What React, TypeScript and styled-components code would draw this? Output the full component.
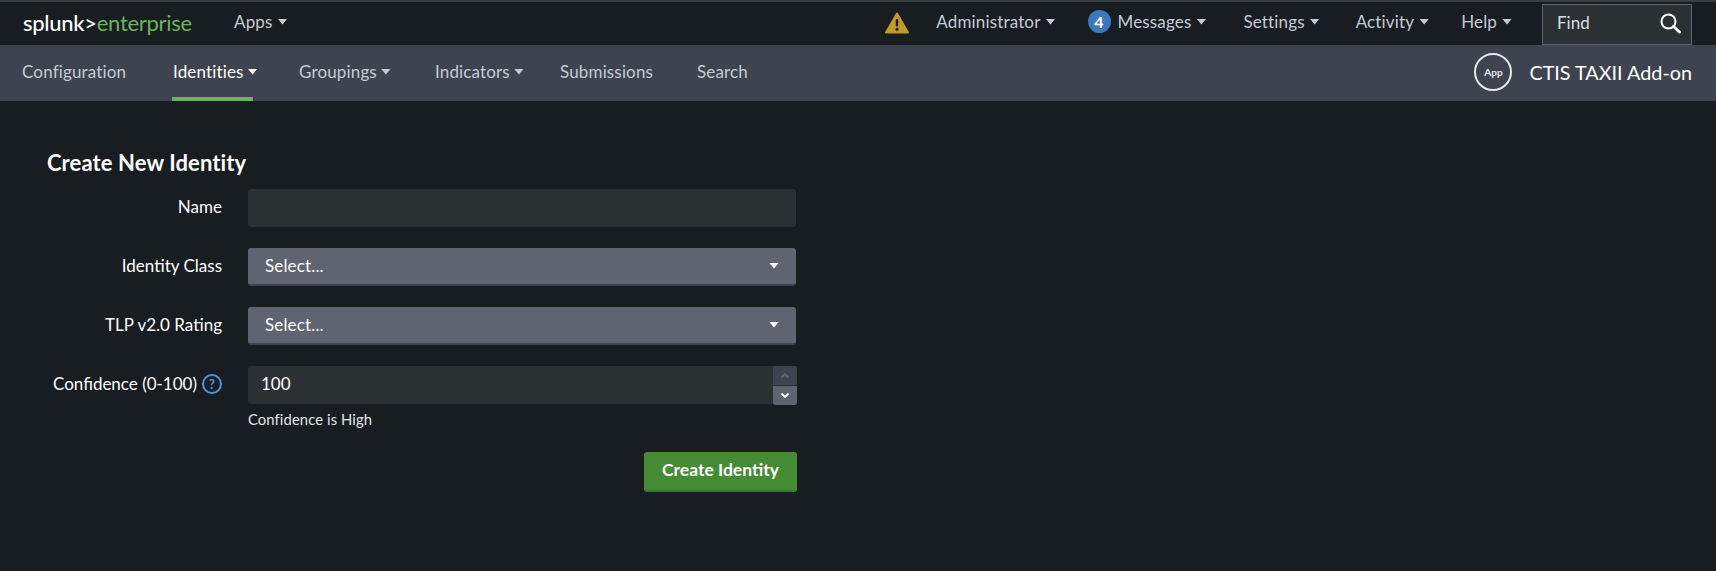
import React from 'react';
import styled, { createGlobalStyle } from 'styled-components';

const GlobalStyle = createGlobalStyle`
  html, body {
    margin: 0;
    height: 100%;
    background-color: #171d21;
    font-family: 'Lato', 'Open Sans', sans-serif;
  }
  * {
    box-sizing: border-box;
  }
`;

const Page = styled.div`
  min-height: 571px;
  background-color: #171d21;
  color: #fff;
`;

const TopBar = styled.header`
  display: flex;
  align-items: center;
  height: 45px;
  padding: 0 24px 0 23px;
  background-color: #171d21;
  border-top: 2px solid #3c3f42;
`;

const Logo = styled.div`
  width: 211px;
  padding-bottom: 2px;
  font-size: 22px;
  letter-spacing: -0.3px;
  color: #fff;
  font-weight: 500;
  white-space: nowrap;

  span {
    color: #6db35c;
    font-weight: 400;
  }
`;

const TopLink = styled.a<{ $gap: number }>`
  display: inline-flex;
  align-items: center;
  gap: 5px;
  margin-right: ${(p) => p.$gap}px;
  padding-bottom: 4px;
  font-size: 17px;
  letter-spacing: 0.15px;
  color: #c3cbd4;
  white-space: nowrap;
`;

const Caret = styled.i<{ $color?: string }>`
  display: inline-block;
  width: 10px;
  height: 6px;
  background-color: ${(p) => p.$color || '#c3cbd4'};
  clip-path: polygon(0 0, 100% 0, 50% 100%);
`;

const Spacer = styled.div`
  flex: 1;
`;

const WarningIcon = styled.svg`
  width: 24px;
  height: 22px;
  margin-right: 27px;
  margin-bottom: 2px;
`;

const Badge = styled.span`
  display: inline-flex;
  align-items: center;
  justify-content: center;
  width: 23px;
  height: 23px;
  margin-right: 2px;
  border-radius: 50%;
  background-color: #3c78bd;
  color: #fff;
  font-size: 16px;
  font-weight: 700;
`;

const FindBox = styled.div`
  display: flex;
  align-items: center;
  justify-content: space-between;
  width: 150px;
  height: 41px;
  margin-top: 1px;
  padding: 0 10px 3px 14px;
  background-color: #2b3033;
  border: 1px solid #5c6773;
  font-size: 17px;
  color: #d8dde2;
`;

const AppBar = styled.nav`
  display: flex;
  align-items: stretch;
  height: 56px;
  padding: 0 24px 0 22px;
  background-color: #3e444f;
`;

const NavItem = styled.a<{ $active?: boolean; $width: number }>`
  display: flex;
  align-items: center;
  gap: 4px;
  width: ${(p) => p.$width}px;
  height: 56px;
  padding-bottom: 3px;
  font-size: 17px;
  letter-spacing: 0.15px;
  color: ${(p) => (p.$active ? '#fff' : '#c3cbd4')};
  white-space: nowrap;
`;

const ActiveTab = styled(NavItem)`
  position: relative;

  &::after {
    content: '';
    position: absolute;
    left: -1px;
    bottom: 0;
    width: 81px;
    height: 4px;
    background-color: #6db35c;
  }
`;

const AppTitle = styled.div`
  display: flex;
  align-items: center;
  gap: 17px;
  padding-bottom: 3px;
  font-size: 19.8px;
  color: #fff;
  white-space: nowrap;
`;

const AppCircle = styled.span`
  display: flex;
  align-items: center;
  justify-content: center;
  width: 38px;
  height: 38px;
  border: 2px solid #e6e8ea;
  border-radius: 50%;
  font-size: 10px;
  font-weight: 700;
  color: #e6e8ea;
`;

const Main = styled.main`
  padding: 51px 0 0 47px;
`;

const Heading = styled.h2`
  margin: 0 0 15px;
  font-size: 22px;
  line-height: 22px;
  letter-spacing: 0.1px;
  font-weight: 700;
  color: #fff;
`;

const Form = styled.form`
  display: grid;
  grid-template-columns: 175px 548px;
  column-gap: 26px;
  row-gap: 21px;
  align-items: start;
`;

const Label = styled.label`
  display: flex;
  align-items: center;
  justify-content: flex-end;
  gap: 5px;
  height: 38px;
  padding-bottom: 3px;
  font-size: 17px;
  color: #fff;
  white-space: nowrap;
`;

const TextInput = styled.input`
  display: block;
  width: 100%;
  height: 38px;
  padding: 0 13px 3px;
  border: none;
  border-radius: 3px;
  background-color: #2b3033;
  color: #fff;
  font-family: inherit;
  font-size: 17px;
  outline: none;
`;

const SelectButton = styled.div`
  display: flex;
  align-items: center;
  justify-content: space-between;
  height: 38px;
  padding: 0 17px 1px;
  border-radius: 3px;
  background-color: #5e6570;
  border-bottom: 2px solid #3e444f;
  font-size: 17px;
  letter-spacing: 0.15px;
  color: #fff;
`;

const NumberField = styled.div`
  position: relative;
`;

const Stepper = styled.div`
  position: absolute;
  top: 0;
  right: -1px;
  display: flex;
  flex-direction: column;
  gap: 1px;
  width: 24px;
  height: 39px;
`;

const StepButton = styled.span<{ $disabled?: boolean }>`
  display: flex;
  align-items: center;
  justify-content: center;
  height: 19px;
  border-radius: ${(p) => (p.$disabled ? '3px 3px 0 0' : '0 0 3px 3px')};
  background-color: ${(p) => (p.$disabled ? '#3e444f' : '#5e6570')};
`;

const HelpText = styled.div`
  margin-top: 7px;
  font-size: 14.8px;
  line-height: 16px;
  letter-spacing: 0.1px;
  color: #e1e4e8;
`;

const HelpIcon = styled.span`
  display: inline-flex;
  align-items: center;
  justify-content: center;
  width: 20px;
  height: 20px;
  border: 2px solid #4b95e6;
  border-radius: 50%;
  font-size: 13px;
  font-weight: 700;
  color: #4b95e6;
`;

const Actions = styled.div`
  grid-column: 2;
  display: flex;
  justify-content: flex-end;
  margin-top: 4px;
  margin-right: -1px;
`;

const SubmitButton = styled.button`
  width: 153px;
  height: 40px;
  padding: 0 0 3px;
  border: none;
  border-bottom: 2px solid #3c7a2c;
  border-radius: 3px;
  background-color: #458b33;
  color: #fff;
  font-family: inherit;
  font-size: 17.5px;
  font-weight: 700;
`;

const Chevron: React.FC<{ up?: boolean; color: string }> = ({ up, color }) => (
  <svg width="10" height="7" viewBox="0 0 10 7">
    <path d={up ? 'M1.5 5.5 5 2l3.5 3.5' : 'M1.5 1.5 5 5l3.5-3.5'} fill="none" stroke={color} strokeWidth="1.8" />
  </svg>
);

const App: React.FC = () => {
  return (
    <Page>
      <GlobalStyle />
      <TopBar>
        <Logo>
          splunk&gt;<span>enterprise</span>
        </Logo>
        <TopLink $gap={0}>
          Apps <Caret />
        </TopLink>
        <Spacer />
        <WarningIcon viewBox="0 0 24 22">
          <path d="M12 1.5 23 20.5H1Z" fill="#c0992a" stroke="#c0992a" strokeWidth="2" strokeLinejoin="round" />
          <rect x="10.8" y="7" width="2.4" height="7.5" rx="1" fill="#171d21" />
          <circle cx="12" cy="17.2" r="1.5" fill="#171d21" />
        </WarningIcon>
        <TopLink $gap={32}>
          Administrator <Caret />
        </TopLink>
        <TopLink $gap={37}>
          <Badge>4</Badge>
          Messages <Caret />
        </TopLink>
        <TopLink $gap={36}>
          Settings <Caret />
        </TopLink>
        <TopLink $gap={32}>
          Activity <Caret />
        </TopLink>
        <TopLink $gap={30}>
          Help <Caret />
        </TopLink>
        <FindBox>
          Find
          <svg width="22" height="22" viewBox="0 0 22 22">
            <circle cx="9.5" cy="9.5" r="7" fill="none" stroke="#fff" strokeWidth="2" />
            <path d="m14.5 14.5 6 5.5" stroke="#fff" strokeWidth="3" strokeLinecap="round" />
          </svg>
        </FindBox>
      </TopBar>
      <AppBar>
        <NavItem $width={151}>Configuration</NavItem>
        <ActiveTab $active $width={126}>
          Identities <Caret $color="#fff" />
        </ActiveTab>
        <NavItem $width={136}>
          Groupings <Caret />
        </NavItem>
        <NavItem $width={125}>
          Indicators <Caret />
        </NavItem>
        <NavItem $width={137}>Submissions</NavItem>
        <NavItem $width={80}>Search</NavItem>
        <Spacer />
        <AppTitle>
          <AppCircle>App</AppCircle>
          CTIS TAXII Add-on
        </AppTitle>
      </AppBar>
      <Main>
        <Heading>Create New Identity</Heading>
        <Form>
          <Label>Name</Label>
          <TextInput type="text" />
          <Label>Identity Class</Label>
          <SelectButton>
            Select... <Caret $color="#fff" />
          </SelectButton>
          <Label>TLP v2.0 Rating</Label>
          <SelectButton>
            Select... <Caret $color="#fff" />
          </SelectButton>
          <Label>
            Confidence (0-100) <HelpIcon>?</HelpIcon>
          </Label>
          <div>
            <NumberField>
              <TextInput type="text" defaultValue="100" />
              <Stepper>
                <StepButton $disabled>
                  <Chevron up color="#5e6570" />
                </StepButton>
                <StepButton>
                  <Chevron color="#fff" />
                </StepButton>
              </Stepper>
            </NumberField>
            <HelpText>Confidence is High</HelpText>
          </div>
          <Actions>
            <SubmitButton type="button">Create Identity</SubmitButton>
          </Actions>
        </Form>
      </Main>
    </Page>
  );
};

export default App;
